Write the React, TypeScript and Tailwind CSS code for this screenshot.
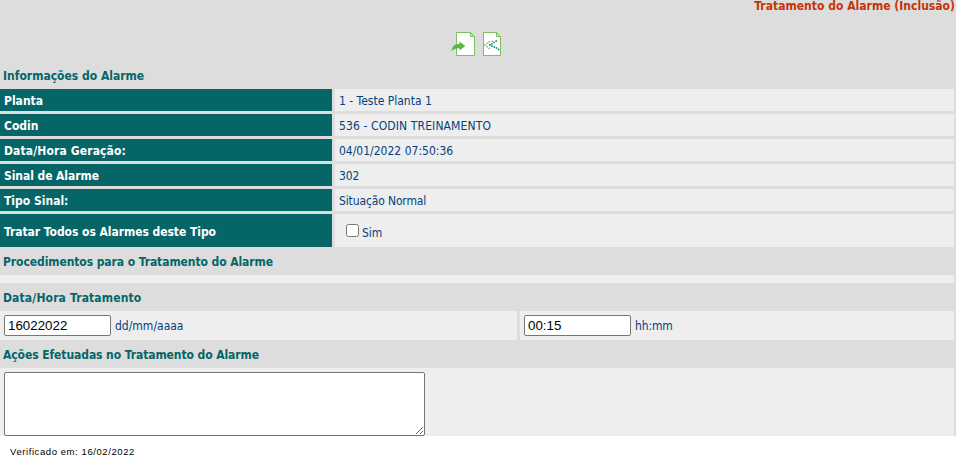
import React from "react";

const details = [
  { label: "Planta", value: "1 - Teste Planta 1", lt: "tracking-[0px]", vt: "tracking-[0px]" },
  { label: "Codin", value: "536 - CODIN TREINAMENTO", lt: "tracking-[0px]", vt: "tracking-[0.12px]" },
  { label: "Data/Hora Geração:", value: "04/01/2022 07:50:36", lt: "tracking-[0.13px]", vt: "tracking-[0px]" },
  { label: "Sinal de Alarme", value: "302", lt: "tracking-[-0.07px]", vt: "tracking-[-0.1px]" },
  { label: "Tipo Sinal:", value: "Situação Normal", lt: "tracking-[0px]", vt: "tracking-[-0.13px]" },
];

function Section({ children, tracking }: { children: React.ReactNode; tracking: string }) {
  return (
    <h2 className={"flex h-7 items-center pt-0.5 pl-[3px] font-bold text-[#056567] " + tracking}>{children}</h2>
  );
}

function ExportIcon() {
  return (
    <svg width="26" height="26" viewBox="0 0 26 26" fill="none">
      <path d="M5.5 1.5H19.5L23.5 5.5V24.5H5.5Z" fill="#fff" stroke="#7dbf5c" />
      <path d="M19.5 1.5V5.5H23.5Z" fill="#cfe8c2" stroke="#7dbf5c" />
      <path d="M0.3 20.5C1 15.500 4 12.800 8.500 12.800V10.500L14.300 15L8.500 19.500V17.300C5 17 2.500 18 0.300 20.500Z" fill="#63b246" />
    </svg>
  );
}

const greenDots = [[3, 14], [5, 12.3], [7.3, 10.8], [10.3, 10.3], [5, 15.7], [7.3, 17.3]];
const tealDots = [[8, 14], [10, 12.8], [12, 11.3], [14.2, 10], [10, 15], [12.3, 16], [14.5, 17], [16.5, 18.5]];

function BackIcon() {
  return (
    <svg width="20" height="26" viewBox="0 0 20 26" fill="none">
      <path d="M1.5 1.5H14.5L18.500 5.500V24.500H1.500Z" fill="#fff" stroke="#7dbf5c" />
      <path d="M14.500 1.500V5.500H18.500Z" fill="#cfe8c2" stroke="#7dbf5c" />
      {greenDots.map(([x, y]) => (
        <circle key={x + "-" + y} cx={x} cy={y} r="0.9" fill="#80c062" />
      ))}
      {tealDots.map(([x, y]) => (
        <circle key={x + "-" + y} cx={x} cy={y} r="0.9" fill="#168f80" />
      ))}
    </svg>
  );
}

export default function App() {
  return (
    <div className="h-[466px] w-[956px] overflow-hidden bg-white font-['DejaVu_Sans_Condensed','DejaVu_Sans',sans-serif] text-[12px] leading-[14px]">
      <main className="h-[436px] bg-[#dddddd] pr-[2px] text-[#053f7d]">
        <header className="-mr-[2px] flex h-[31px] justify-end pr-px font-bold text-[#c53307]">
          <h1 className="-mt-px whitespace-nowrap tracking-[0.02px]">Tratamento do Alarme (Inclusão)</h1>
        </header>
        <div className="flex h-[30px] gap-[5px] pl-[451px]">
          <ExportIcon />
          <BackIcon />
        </div>
        <Section tracking="tracking-[0px]">Informações do Alarme</Section>
        <div className="grid grid-cols-[332px_1fr] gap-[3px]">
          {details.map((d) => (
            <React.Fragment key={d.label}>
              <div className={"flex h-[22px] items-center bg-[#056567] pt-0.5 pl-1 font-bold text-white " + d.lt}>{d.label}</div>
              <div className={"flex h-[22px] items-center bg-[#eeeeee] pt-0.5 pl-1 " + d.vt}>{d.value}</div>
            </React.Fragment>
          ))}
          <div className="flex h-[33px] items-center bg-[#056567] pt-0.5 pl-1 font-bold tracking-[-0.05px] text-white">
            Tratar Todos os Alarmes deste Tipo
          </div>
          <label className="flex h-[33px] items-center bg-[#eeeeee] pl-[11px]">
            <input type="checkbox" className="mr-[3px] h-[13px] w-[13px]" />
            <span className="pt-1">Sim</span>
          </label>
        </div>
        <Section tracking="tracking-[-0.08px]">Procedimentos para o Tratamento do Alarme</Section>
        <div className="h-2 bg-[#eeeeee]" />
        <Section tracking="tracking-[0.15px]">Data/Hora Tratamento</Section>
        <div className="grid h-[29px] grid-cols-[517px_1fr] gap-[3px]">
          <label className="flex items-center gap-1 bg-[#eeeeee] pl-1">
            <input defaultValue="16022022" className="h-[21px] w-[107px] rounded-[2px] border border-[#767676] bg-white px-[3px] font-['Liberation_Sans',Arial,sans-serif] text-[13.33px] text-black" />
            <span>dd/mm/aaaa</span>
          </label>
          <label className="flex items-center gap-1 bg-[#eeeeee] pl-1">
            <input defaultValue="00:15" className="h-[21px] w-[107px] rounded-[2px] border border-[#767676] bg-white px-[3px] font-['Liberation_Sans',Arial,sans-serif] text-[13.33px] text-black" />
            <span className="tracking-[-0.15px]">hh:mm</span>
          </label>
        </div>
        <Section tracking="tracking-[-0.08px]">Ações Efetuadas no Tratamento do Alarme</Section>
        <div className="h-[68px] bg-[#eeeeee] pt-1 pl-1">
          <textarea className="block h-16 w-[421px] resize rounded-[2px] border border-[#767676] bg-white" />
        </div>
      </main>
      <footer className="pt-[9px] pl-[10px] font-['Liberation_Sans',Arial,sans-serif] text-[9.5px] tracking-[0.58px] text-black">
        Verificado em: 16/02/2022
      </footer>
    </div>
  );
}
